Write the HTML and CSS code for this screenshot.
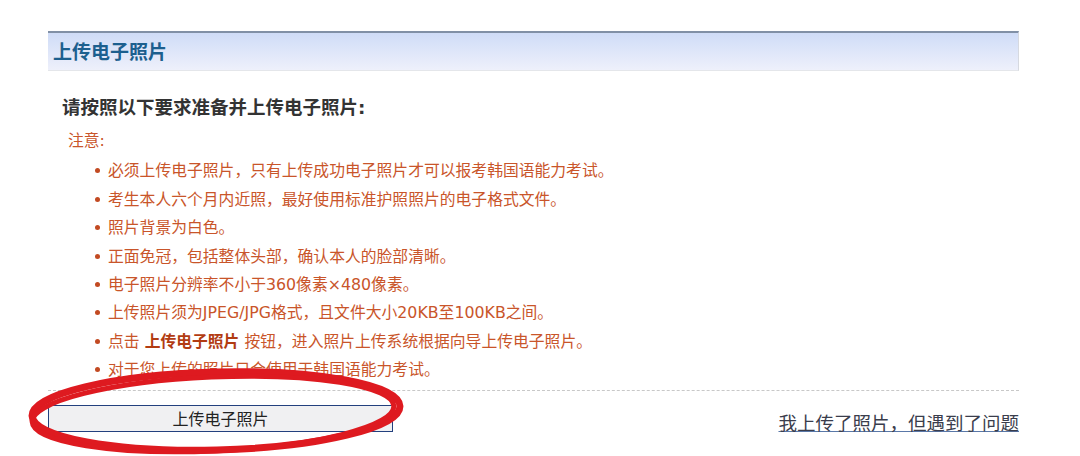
FILE: index.html
```html
<!DOCTYPE html>
<html lang="zh-CN">
<head>
    <meta charset="UTF-8">
    <title>上传电子照片</title>
    <link rel="stylesheet" href="styles.css">
</head>
<body>
    <div class="page">
        <div class="panel-head">
            <h2>上传电子照片</h2>
        </div>

        <div class="panel-body">
            <h3>请按照以下要求准备并上传电子照片:</h3>
            <div class="notice">
                <p>注意:</p>
                <ul>
                    <li>必须上传电子照片，只有上传成功电子照片才可以报考韩国语能力考试。</li>
                    <li>考生本人六个月内近照，最好使用标准护照照片的电子格式文件。</li>
                    <li>照片背景为白色。</li>
                    <li>正面免冠，包括整体头部，确认本人的脸部清晰。</li>
                    <li>电子照片分辨率不小于360像素×480像素。</li>
                    <li>上传照片须为JPEG/JPG格式，且文件大小20KB至100KB之间。</li>
                    <li>点击 <b>上传电子照片</b> 按钮，进入照片上传系统根据向导上传电子照片。</li>
                    <li>对于您上传的照片只会使用于韩国语能力考试。</li>
                </ul>
            </div>
        </div>

        <div class="actions">
            <button class="upload-btn">上传电子照片</button>
            <a class="help-link" href="#">我上传了照片，但遇到了问题</a>
        </div>

        <!-- 红色圈注 -->
        <svg class="mark" width="1080" height="456" viewBox="0 0 1080 456">
            <ellipse cx="216" cy="411" rx="184" ry="39" fill="none" stroke="#de1a20" stroke-width="7" transform="rotate(-1.5 216 411)"/>
            <ellipse cx="213" cy="414" rx="181" ry="37" fill="none" stroke="#de1a20" stroke-width="5" transform="rotate(-2.5 213 414)"/>
        </svg>
    </div>
</body>
</html>
```

FILE: styles.css
```css
body {
    margin: 0;
    background: #fff;
    font-family: "DejaVu Sans", "Noto Sans CJK SC", sans-serif;
}

.page {
    position: relative;
    width: 1080px;
    height: 456px;
    overflow: hidden;
    padding: 31px 61px 0 48px;
    box-sizing: border-box;
}

.panel-head {
    height: 40px;
    box-sizing: border-box;
    border-top: 2px solid #8190a6;
    border-right: 1px solid #d6d9e0;
    border-bottom: 1px solid #e4e6ea;
    background: linear-gradient(#cfdcf7, #eef0fb);
    display: flex;
    align-items: center;
    padding-left: 5px;
}

.panel-head h2 {
    margin: 0;
    font-size: 19px;
    font-weight: bold;
    color: #1c5f8e;
    line-height: 24px;
}

.panel-body {
    padding-left: 14px;
}

.panel-body h3 {
    margin: 25px 0 0;
    font-size: 18.5px;
    font-weight: bold;
    color: #333;
    line-height: 24px;
}

.notice {
    color: #c9552a;
    font-size: 15.8px;
    line-height: 28.4px;
}

.notice p {
    margin: 7px 0 0 6px;
    height: 28.4px;
}

.notice ul {
    margin: 2px 0 0;
    padding-left: 46px;
    list-style: none;
}

.notice li {
    height: 28.4px;
    white-space: nowrap;
}

.notice li::before {
    content: "";
    display: inline-block;
    width: 5px;
    height: 5px;
    border-radius: 50%;
    background: #c24a22;
    vertical-align: middle;
    margin: -2px 8px 0 -13px;
}

.notice b {
    color: #b23c12;
}

.actions {
    margin-top: 5px;
    border-top: 1px dashed #c8c8c8;
    padding-top: 14px;
    display: flex;
    justify-content: space-between;
    align-items: flex-end;
}

.upload-btn {
    width: 345px;
    height: 27px;
    background: #f0f0f2;
    border: 1px solid #23407e;
    font-family: "Noto Sans CJK SC", sans-serif;
    font-size: 16px;
    color: #222;
    padding: 0;
    line-height: 25px;
}

.help-link {
    font-family: "Noto Sans CJK SC", sans-serif;
    font-size: 18.5px;
    color: #3a3d4c;
    text-decoration: underline;
    text-decoration-color: #5a78a8;
    line-height: 24px;
    margin-bottom: -2px;
}

.mark {
    position: absolute;
    left: 0;
    top: 0;
    pointer-events: none;
}
```
